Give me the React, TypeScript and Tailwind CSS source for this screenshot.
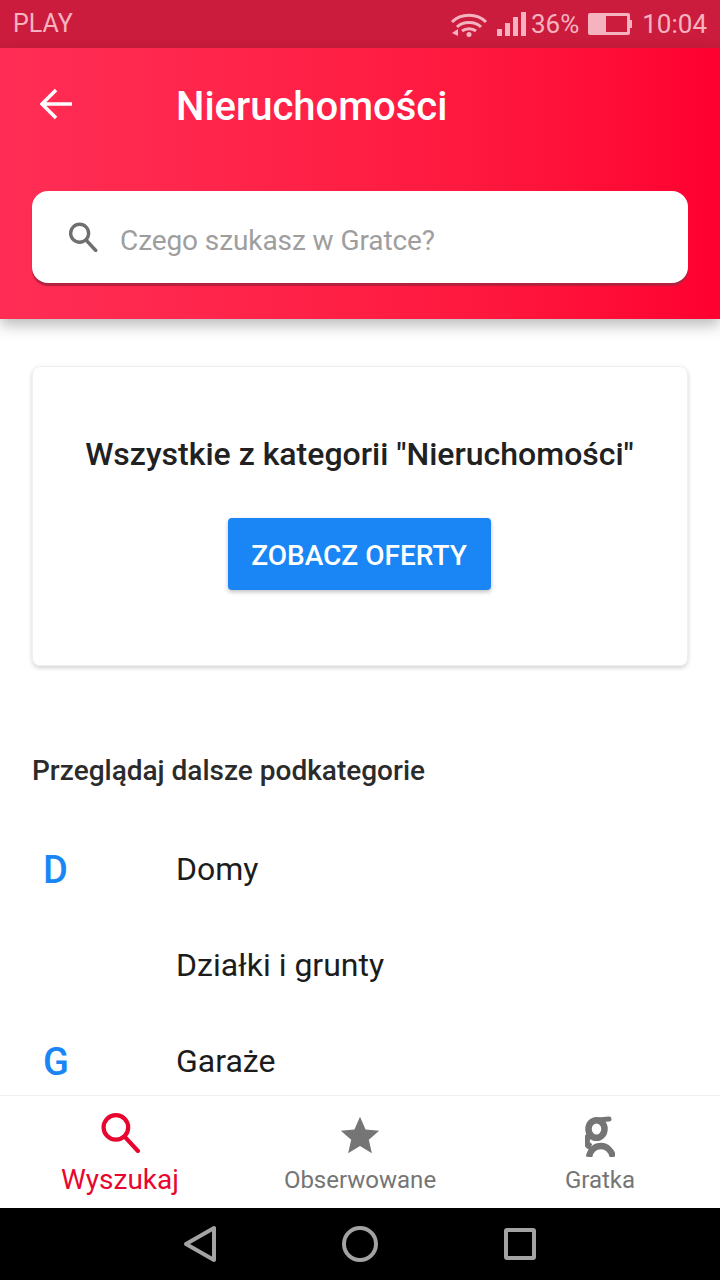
import React from 'react';

function SearchIcon({ className, strokeWidth = 3 }: { className?: string; strokeWidth?: number }) {
  return (
    <svg viewBox="0 0 40 40" className={className} fill="none" stroke="currentColor" strokeWidth={strokeWidth}>
      <circle cx="15.5" cy="15" r="12" />
      <path d="M24 24 L37 38" strokeLinecap="round" />
    </svg>
  );
}

function NavItem({ label, active, children }: { label: string; active?: boolean; children: React.ReactNode }) {
  return (
    <div className="flex-1 flex flex-col items-center">
      <div className="h-[46px] mt-[16px] flex items-start justify-center">{children}</div>
      <span
        className={
          active
            ? 'text-[28px] leading-[36px] mt-[4px] text-[#e8062f] font-normal'
            : 'text-[24px] leading-[36px] mt-[4px] text-[#757575]'
        }
      >
        {label}
      </span>
    </div>
  );
}

function Row({ letter, label }: { letter?: string; label: string }) {
  return (
    <div className="flex items-center h-[96px]">
      <span className="w-[144px] pl-[11px] mt-[2px] text-[38px] font-medium text-[#1a86f5]">{letter}</span>
      <span className="text-[32px] text-[#1c1c1c]">{label}</span>
    </div>
  );
}

export default function App() {
  return (
    <div className="w-[720px] h-[1280px] flex flex-col overflow-hidden bg-white font-['Roboto',sans-serif]">
      {/* status bar */}
      <div className="h-[48px] shrink-0 bg-[#cb1c3d] flex items-center justify-between pl-[13px] pr-[13px] text-[#f5b3c0] text-[26px]">
        <span className="text-[25px]">PLAY</span>
        <div className="flex items-center">
          <svg viewBox="0 0 38 26" className="w-[38px] h-[26px]" fill="none" stroke="currentColor" strokeWidth="3">
            <path d="M2 11 C11 2 27 2 36 11" />
            <path d="M7 16 C13 10 25 10 31 16" />
            <path d="M12 20 C16 17 22 17 26 20" />
            <circle cx="19" cy="23.5" r="2.5" fill="currentColor" stroke="none" />
            <path d="M2 22 L8 18 L8 25 Z" fill="currentColor" stroke="none" />
          </svg>
          <div className="flex items-end gap-[3px] h-[24px] ml-[9px]">
            <div className="w-[5px] h-[7px] bg-[#f5b3c0]" />
            <div className="w-[5px] h-[13px] bg-[#f5b3c0]" />
            <div className="w-[5px] h-[19px] bg-[#f5b3c0]" />
            <div className="w-[5px] h-[24px] bg-[#f5b3c0]" />
          </div>
          <span className="ml-[5px]">36%</span>
          <div className="ml-[9px] flex items-center">
            <div className="w-[42px] h-[22px] border-[3px] border-[#f5b3c0] rounded-[2px] flex">
              <div className="w-[15px] bg-[#f5b3c0]" />
            </div>
            <div className="w-[2px] h-[8px] bg-[#f5b3c0]" />
          </div>
          <span className="ml-[10px]">10:04</span>
        </div>
      </div>

      {/* header */}
      <div className="h-[271px] shrink-0 bg-gradient-to-r from-[#ff2d55] to-[#ff0030] shadow-[0_6px_14px_rgba(0,0,0,0.28)] z-10 flex flex-col">
        <div className="h-[116px] flex items-center shrink-0 pb-[4px]">
          <div className="w-[176px] pl-[40px]">
            <svg viewBox="0 0 32 32" className="w-[32px] h-[32px]" fill="none" stroke="#fff" strokeWidth="3.5">
              <path d="M32 16 H2 M16 2 L2 16 L16 30" />
            </svg>
          </div>
          <span className="mt-[6px] text-[40px] font-medium text-white">Nieruchomości</span>
        </div>
        <div className="mx-[32px] mt-[27px] h-[92px] bg-white rounded-[16px] shadow-[0_3px_1px_#b3213f] flex items-center">
          <SearchIcon className="ml-[36px] w-[30px] h-[30px] text-[#6f6f6f]" strokeWidth={4.5} />
          <span className="ml-[22px] mt-[8px] text-[28px] tracking-[-0.09px] text-[#9e9e9e]">Czego szukasz w Gratce?</span>
        </div>
      </div>

      {/* content */}
      <div className="flex-1 min-h-0 overflow-hidden px-[32px] pt-[47px]">
        <div className="h-[300px] rounded-[8px] border border-[#efefef] shadow-[0_2px_4px_rgba(0,0,0,0.18)] flex flex-col items-center">
          <h2 className="mt-[65px] mr-[1px] text-[32px] leading-[44px] font-medium text-[#212121]">
            Wszystkie z kategorii "Nieruchomości"
          </h2>
          <button className="mt-[42px] mr-[2px] pt-[4px] w-[263px] h-[72px] bg-[#1a86f5] rounded-[4px] text-white text-[28px] font-medium shadow-[0_2px_4px_rgba(0,0,0,0.25)]">
            ZOBACZ OFERTY
          </button>
        </div>
        <h3 className="mt-[87px] text-[28px] leading-[36px] font-medium text-[#2b2b2b]">Przeglądaj dalsze podkategorie</h3>
        <div className="mt-[32px]">
          <Row letter="D" label="Domy" />
          <Row label="Działki i grunty" />
          <Row letter="G" label="Garaże" />
        </div>
      </div>

      {/* bottom tabs */}
      <div className="h-[113px] shrink-0 bg-white border-t border-[#f0f0f0] flex">
        <NavItem label="Wyszukaj" active>
          <SearchIcon className="w-[41px] h-[41px] text-[#e8062f]" strokeWidth={4.1} />
        </NavItem>
        <NavItem label="Obserwowane">
          <svg viewBox="0 0 24 24" className="w-[46px] h-[46px] text-[#757575]" fill="currentColor">
            <path d="M12 2.5 L14.9 9.1 L22 9.8 L16.6 14.5 L18.2 21.5 L12 17.8 L5.8 21.5 L7.4 14.5 L2 9.8 L9.1 9.1 Z" />
          </svg>
        </NavItem>
        <NavItem label="Gratka">
          <svg viewBox="0 0 30 41" className="mt-[4px] w-[30px] h-[41px] text-[#757575]" fill="none" stroke="currentColor">
            <ellipse cx="11.5" cy="13" rx="8" ry="8.8" strokeWidth="6.5" />
            <path d="M13 4 L24 3" strokeWidth="5" strokeLinecap="round" />
            <path d="M4 20 C0 24 1 29 6 31" strokeWidth="6.5" />
            <path d="M4 41 C5.5 33 11 30 16 30 C22 30 26.5 35 28 41" strokeWidth="6.5" />
          </svg>
        </NavItem>
      </div>

      {/* android nav */}
      <div className="h-[72px] shrink-0 bg-black flex items-center justify-center text-[#a3a3a3]">
        <div className="w-[160px] flex justify-center">
          <svg viewBox="0 0 34 38" className="w-[34px] h-[38px]" fill="none" stroke="currentColor" strokeWidth="4" strokeLinejoin="round">
            <path d="M31 3 V35 L3 19 Z" />
          </svg>
        </div>
        <div className="w-[160px] flex justify-center">
          <div className="w-[36px] h-[36px] rounded-full border-[4px] border-[#a3a3a3]" />
        </div>
        <div className="w-[160px] flex justify-center">
          <div className="w-[32px] h-[32px] rounded-[3px] border-[4px] border-[#a3a3a3]" />
        </div>
      </div>
    </div>
  );
}
